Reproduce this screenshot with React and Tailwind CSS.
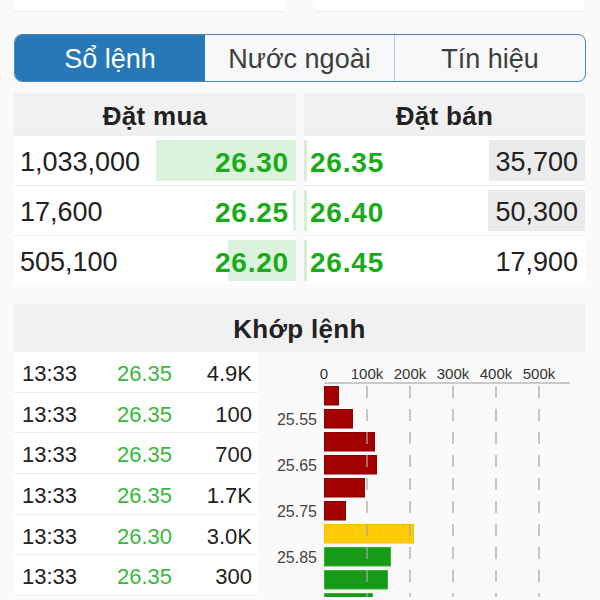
import React from 'react';

const bids = [
  { qty: '1,033,000', price: '26.30', bar: 140 },
  { qty: '17,600', price: '26.25', bar: 3 },
  { qty: '505,100', price: '26.20', bar: 68 },
];

const asks = [
  { qty: '35,700', price: '26.35', bar: 96 },
  { qty: '50,300', price: '26.40', bar: 97 },
  { qty: '17,900', price: '26.45', bar: 0 },
];

const trades = [
  { time: '13:33', price: '26.35', vol: '4.9K' },
  { time: '13:33', price: '26.35', vol: '100' },
  { time: '13:33', price: '26.35', vol: '700' },
  { time: '13:33', price: '26.35', vol: '1.7K' },
  { time: '13:33', price: '26.30', vol: '3.0K' },
  { time: '13:33', price: '26.35', vol: '300' },
];

// volume profile bars, widths in px (100k = 43px)
const volBars = [
  { w: 14, c: 'red' },
  { w: 28, c: 'red' },
  { w: 50, c: 'red' },
  { w: 52, c: 'red' },
  { w: 40, c: 'red' },
  { w: 21, c: 'red' },
  { w: 89, c: 'yellow' },
  { w: 66, c: 'green' },
  { w: 63, c: 'green' },
  { w: 48, c: 'green' },
];

const barColors = {
  red: { fill: '#a30000', stroke: '#8c0000' },
  yellow: { fill: '#ffcb05', stroke: '#f2bf00' },
  green: { fill: '#179a17', stroke: '#35b535' },
};

const yLabels = ['25.55', '25.65', '25.75', '25.85', '25.95'];
const xLabels = ['0', '100k', '200k', '300k', '400k', '500k'];

function VolumeChart() {
  const x0 = 66;
  const step = 43;
  return (
    <svg width="327" height="245" className="block">
      {xLabels.map((l, i) => (
        <text
          key={l}
          x={x0 + step * i}
          y="27"
          textAnchor="middle"
          fontSize="15"
          fill="#333"
          fontFamily="Liberation Sans, sans-serif"
        >
          {l}
        </text>
      ))}
      <line x1={x0} y1="31" x2="312" y2="31" stroke="#9a9a9a" strokeWidth="1.2" />
      {volBars.map((b, i) => (
        <rect
          key={i}
          x={x0 + 0.5}
          y={34.5 + 23 * i}
          width={b.w}
          height="18.5"
          fill={barColors[b.c].fill}
          stroke={barColors[b.c].stroke}
          strokeWidth="1"
        />
      ))}
      {[1, 2, 3, 4, 5].map((k) => (
        <line
          key={k}
          x1={x0 + step * k}
          y1="34"
          x2={x0 + step * k}
          y2="245"
          stroke="#a8a8a8"
          strokeOpacity="0.85"
          strokeWidth="1.5"
          strokeDasharray="12 11"
        />
      ))}
      {yLabels.map((l, i) => (
        <text
          key={l}
          x="59"
          y={67 + 46 * i + 6}
          textAnchor="end"
          fontSize="16"
          fill="#444"
          fontFamily="Liberation Sans, sans-serif"
        >
          {l}
        </text>
      ))}
    </svg>
  );
}

export default function App() {
  return (
    <div className="w-[600px] h-[600px] overflow-hidden bg-[#fafafa] text-[#222] font-['Liberation_Sans',sans-serif]">
      {/* cut-off cards above */}
      <div className="flex h-[12px]">
        <div className="ml-[14px] w-[271px] bg-white border-b border-[#ececec]" />
        <div className="ml-auto mr-[16px] w-[268px] bg-white border-b border-[#ececec]" />
      </div>

      {/* tabs */}
      <div className="mt-[22px] ml-[14px] w-[572px] h-[48px] flex rounded-[8px] border-[1.5px] border-[#4a86b8] overflow-hidden bg-[#f6f8fa]">
        <div className="w-[190px] flex items-center justify-center pt-[2px] bg-[#2878b8] text-white text-[27px]">
          Sổ lệnh
        </div>
        <div className="w-[190px] flex items-center justify-center pt-[2px] text-[#3d3d3d] text-[27px] border-r border-[#b9c5ce]">
          Nước ngoài
        </div>
        <div className="flex-1 flex items-center justify-center pt-[2px] text-[#3d3d3d] text-[27px]">
          Tín hiệu
        </div>
      </div>

      {/* order book */}
      <div className="mt-[11px] ml-[14px] w-[571px] flex gap-[8px]">
        <div className="w-[282px] bg-white">
          <div className="h-[42px] pt-[4px] bg-[#f1f1f1] flex items-center justify-center font-bold text-[26px] tracking-[0.3px]">
            Đặt mua
          </div>
          {bids.map((r) => (
            <div key={r.price} className="relative h-[50px] border-t border-[#ededed] flex items-center justify-between pt-[4px] pl-[6px] pr-[7px]">
              <div
                className="absolute right-0 top-[4px] bottom-[4px] bg-[#dcf2dc]"
                style={{ width: r.bar }}
              />
              <span className="relative text-[27px]">{r.qty}</span>
              <span className="relative text-[28px] font-bold text-[#1aab1a] tracking-[0.8px]">{r.price}</span>
            </div>
          ))}
        </div>
        <div className="flex-1 bg-white">
          <div className="h-[42px] pt-[4px] bg-[#f1f1f1] flex items-center justify-center font-bold text-[26px] tracking-[0.3px]">
            Đặt bán
          </div>
          {asks.map((r) => (
            <div key={r.price} className="relative h-[50px] border-t border-[#ededed] flex items-center justify-between pt-[4px] pl-[6px] pr-[7px]">
              <div className="absolute left-0 top-[4px] bottom-[4px] w-[3px] bg-[#d6eed6]" />
              <div
                className="absolute right-0 top-[4px] bottom-[4px] bg-[#ebebeb]"
                style={{ width: r.bar }}
              />
              <span className="relative text-[28px] font-bold text-[#1aab1a] tracking-[0.8px]">{r.price}</span>
              <span className="relative text-[27px]">{r.qty}</span>
            </div>
          ))}
        </div>
      </div>

      {/* matched orders */}
      <div className="mt-[19px] ml-[14px] w-[571px] h-[48px] pt-[3px] bg-[#f1f1f1] flex items-center justify-center font-bold text-[26px] tracking-[0.3px]">
        Khớp lệnh
      </div>
      <div className="flex">
        <div className="ml-[14px] w-[244px] bg-white">
          {trades.map((t, i) => (
            <div key={i} className="h-[40.7px] border-b border-[#ececec] flex items-center pt-[3px] text-[22px]">
              <span className="w-[103px] pl-[8px]">{t.time}</span>
              <span className="text-[#3bb83b]">{t.price}</span>
              <span className="ml-auto pr-[6px]">{t.vol}</span>
            </div>
          ))}
        </div>
        <VolumeChart />
      </div>
    </div>
  );
}
